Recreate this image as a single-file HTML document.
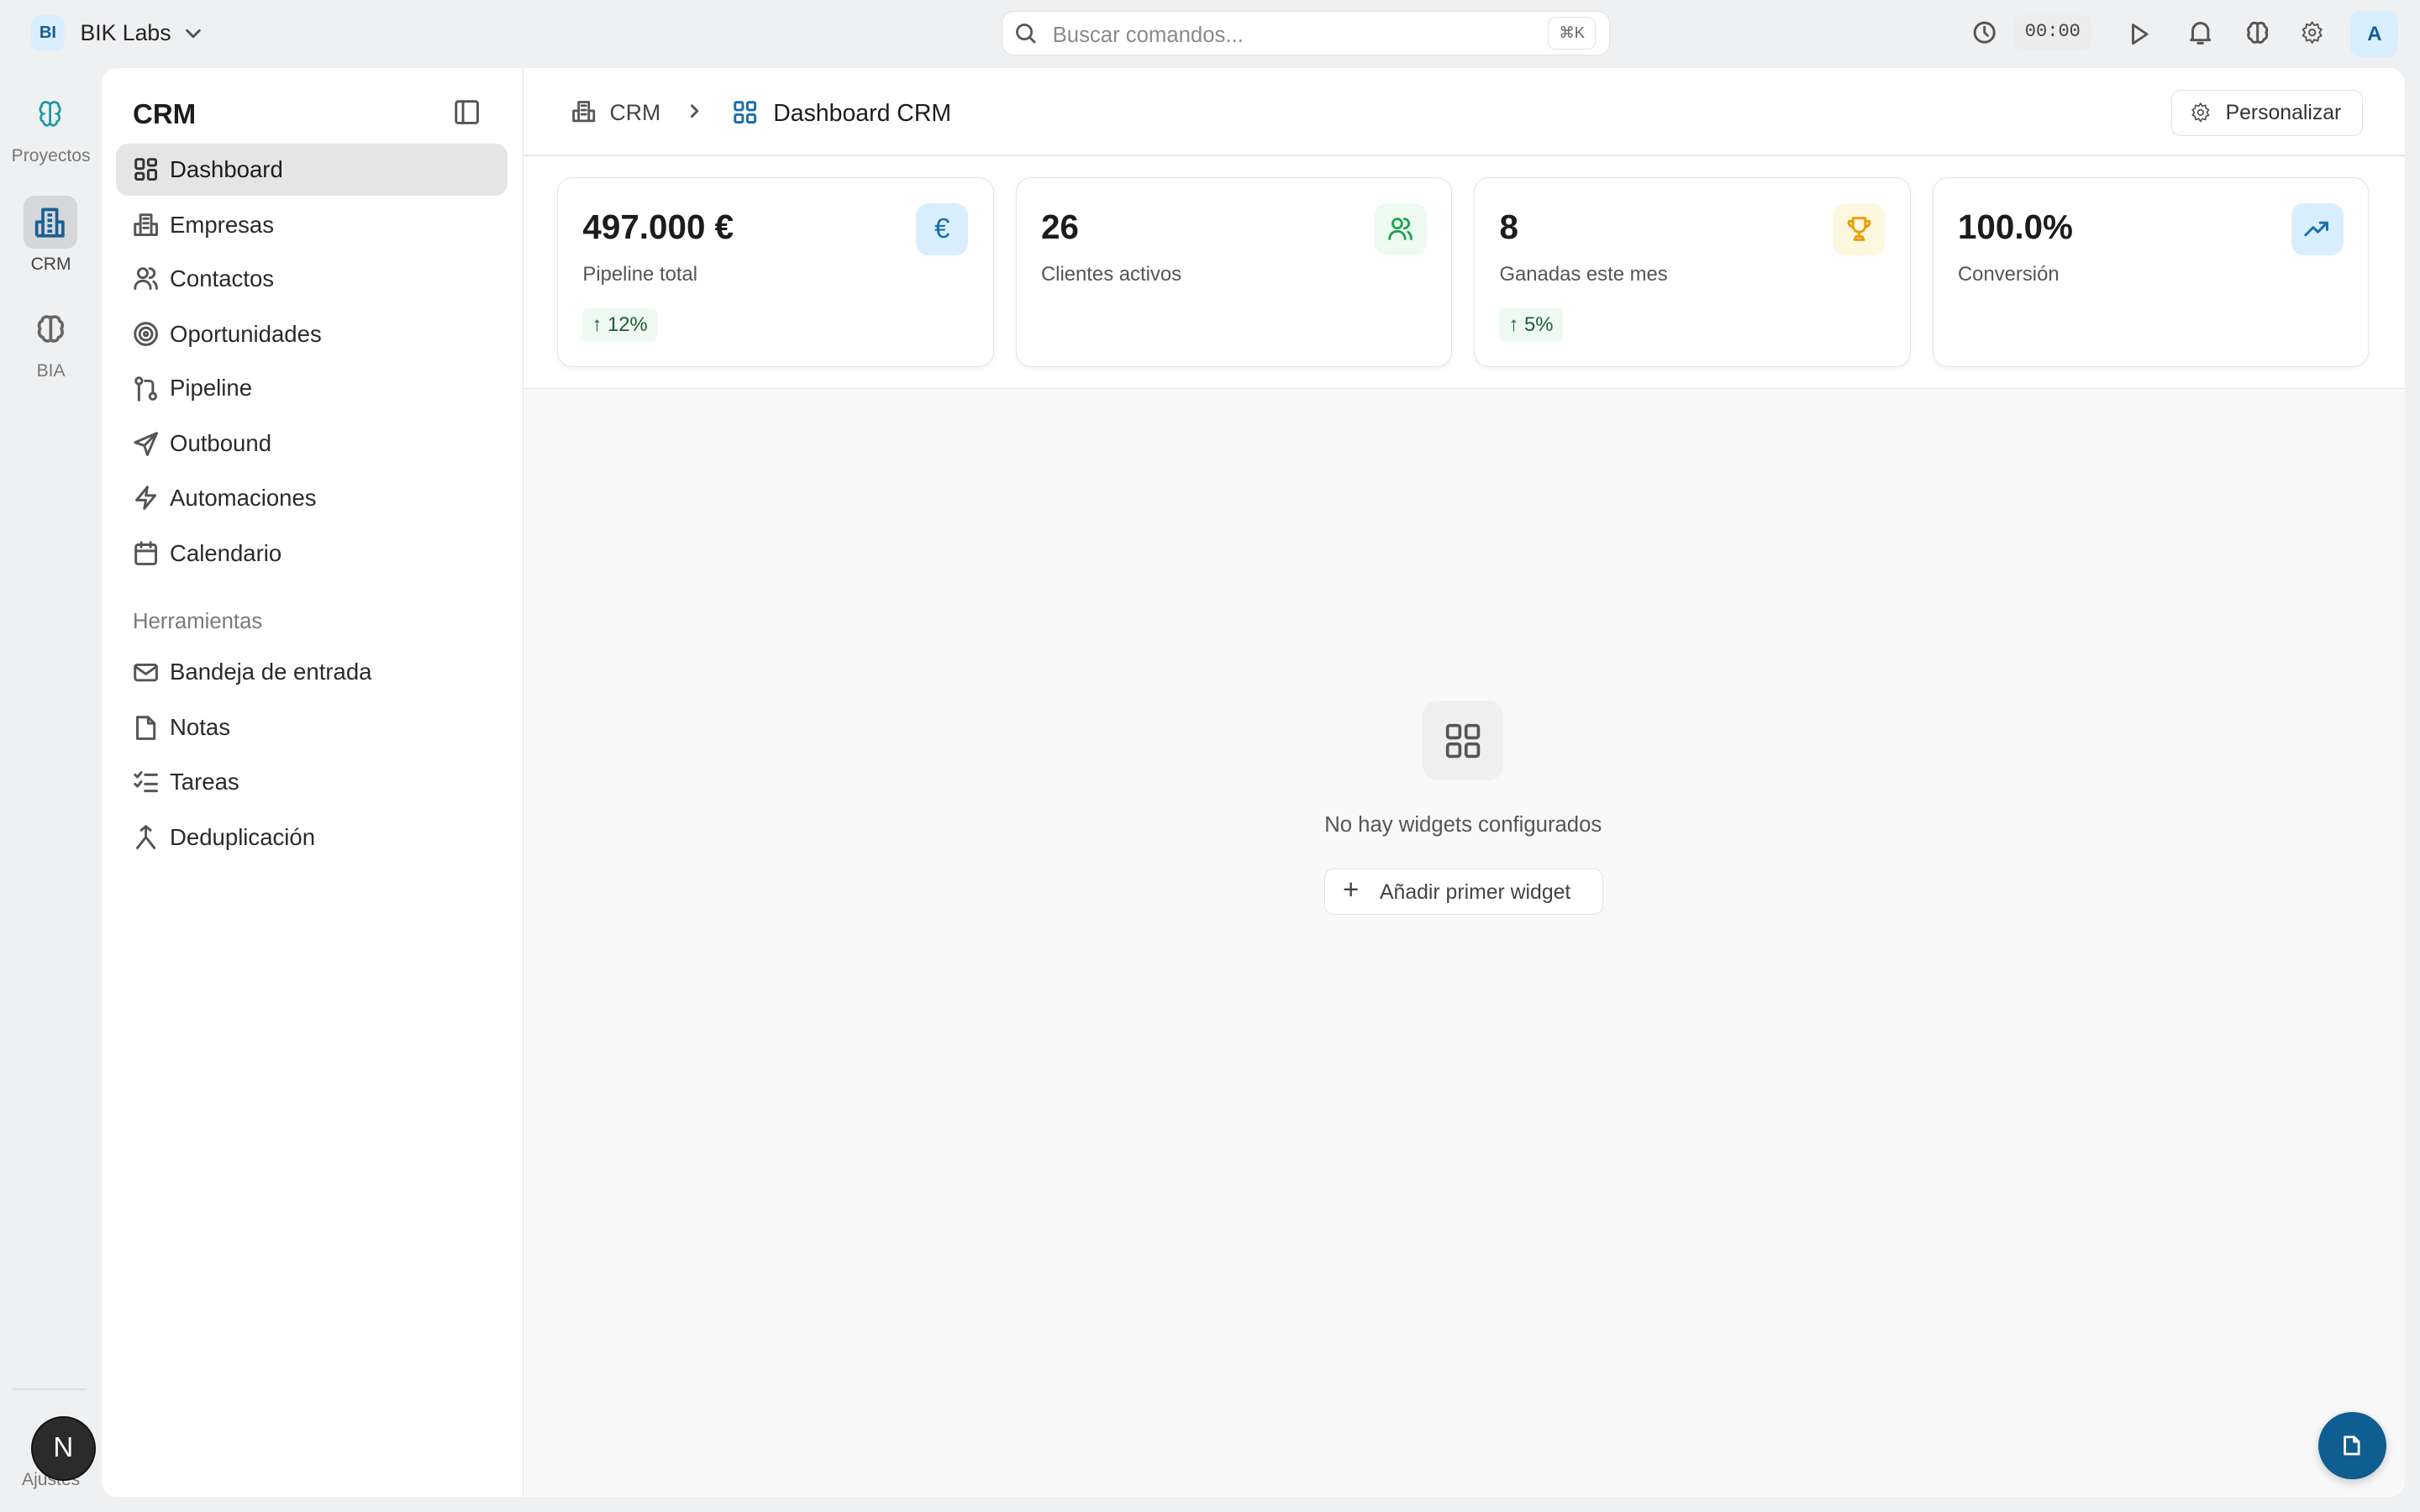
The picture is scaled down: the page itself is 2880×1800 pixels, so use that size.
<!DOCTYPE html>
<html><head><meta charset="utf-8"><style>
*{box-sizing:border-box;margin:0;padding:0}
html,body{width:2880px;height:1800px;overflow:hidden;background:#eff0f2}
#r{width:1568px;height:980px;zoom:1.836735;position:relative;font-family:"Liberation Sans",sans-serif;color:#1f1f1f;background:#eff0f2}
.a{position:absolute}
svg{display:block}
.ic{fill:none;stroke:#555;stroke-width:1.6;stroke-linecap:round;stroke-linejoin:round}
.nav{position:absolute;left:86px;font-size:15px;color:#2a2a2a;display:flex;align-items:center;gap:7px;margin-top:1px}
.nav svg{width:17px;height:17px}
.card{position:absolute;top:115px;width:283px;height:123px;background:#fff;border:1px solid #e4e4e4;border-radius:10px;box-shadow:0 1px 3px rgba(0,0,0,.06)}
.card .v{position:absolute;left:16px;top:19px;font-size:22px;font-weight:bold;color:#1c1c1c}
.card .l{position:absolute;left:16px;top:55px;font-size:13px;color:#555}
.card .b{position:absolute;right:16px;top:16px;width:34px;height:34px;border-radius:8px;display:flex;align-items:center;justify-content:center}
.card .t{position:absolute;left:16px;top:84px;height:22px;padding:0 6px;border-radius:4px;background:#eefaf1;color:#1f5c33;font-size:13px;line-height:22px}
</style></head><body><div id="r">
<div class="a" style="left:20px;top:10px;width:22px;height:23px;border-radius:6px;background:#d9eefc;color:#155e92;font-size:11px;font-weight:bold;text-align:center;line-height:23px">BI</div>
<div class="a" style="left:52px;top:13px;font-size:14.5px;color:#222">BIK Labs</div>
<svg class="a ic" style="left:119px;top:16px" width="12" height="12" viewBox="0 0 12 12"><path d="M2 4l4 4 4-4"/></svg>
<div class="a" style="left:649px;top:7px;width:394px;height:29px;background:#fff;border:1px solid #e2e2e2;border-radius:8px"></div>
<svg class="a ic" style="left:657px;top:14px" width="15" height="15" viewBox="0 0 16 16"><circle cx="7" cy="7" r="5"/><path d="M11 11l3 3"/></svg>
<div class="a" style="left:682px;top:15px;font-size:14px;color:#8a8a8a">Buscar comandos...</div>
<div class="a" style="left:1003px;top:11px;width:31px;height:21px;border:1px solid #e2e2e2;border-radius:5px;font-size:10px;color:#666;text-align:center;line-height:20px">⌘K</div>
<svg class="a ic" style="left:1278px;top:13px" width="16" height="16" viewBox="0 0 16 16"><circle cx="8" cy="8" r="6.3"/><path d="M8 4.5V8l2 2"/></svg>
<div class="a" style="left:1305px;top:10px;width:50px;height:22px;background:#ececec;border-radius:5px;font-family:'Liberation Mono',monospace;font-size:12px;color:#444;text-align:center;line-height:22px">00:00</div>
<svg class="a ic" style="left:1379px;top:14px" width="14" height="16" viewBox="0 0 14 16"><path d="M3 2l9 6-9 6z"/></svg>
<svg class="a ic" style="left:1418px;top:12px" width="16" height="18" viewBox="0 0 16 18"><path d="M3 13V8a5 5 0 0110 0v5l1 1H2z M6.5 16h3"/></svg>
<svg class="a ic" style="left:1455px;top:13px" width="16" height="16" viewBox="0 0 16 16"><path d="M8 2v12M8 2.5C6 1 3.5 2 3.5 4 2 4.5 1.5 6.5 2.5 8 1.5 9.5 2 12 4 12.5 4.5 14.5 7 15 8 13.5 9 15 11.5 14.5 12 12.5 14 12 14.5 9.5 13.5 8 14.5 6.5 14 4.5 12.5 4 12.5 2 10 1 8 2.5"/></svg>
<svg class="a ic" style="left:1490px;top:13px" width="16" height="16" viewBox="0 0 24 24"><circle cx="12" cy="12" r="3"/><path d="M12 2l2 3 3.5-1 .5 3.5L21 9l-2 3 2 3-3 1.5-.5 3.5-3.5-1-2 3-2-3-3.5 1L6 16.5 3 15l2-3-2-3 3-1.5L6.5 4 10 5z"/></svg>
<div class="a" style="left:1523px;top:7px;width:31px;height:30px;border-radius:7px;background:#d9eefc;color:#155e92;font-size:13px;font-weight:bold;text-align:center;line-height:30px">A</div>
<svg class="a" style="left:24px;top:64px" width="17" height="19" viewBox="0 0 17 19" fill="none" stroke="#1b9aa0" stroke-width="1.5"><path d="M8.5 2v15M8 3C6 1 3 2 3 4.5 1.5 6 2 9 4 9.5 2 10.5 2 14 4 14.5 4.5 17 7 18 8 16M9 3c2-2 5-1 5 1.5 1.5 1.5 1 4.5-1 5 2 1 2 4.5 0 5-.5 2.5-3 3.5-4 1.5"/></svg>
<div class="a" style="left:0;top:95px;width:66px;text-align:center;font-size:11.5px;color:#777">Proyectos</div>
<div class="a" style="left:15px;top:127px;width:35px;height:34px;background:#d5d7da;border-radius:7px"></div>
<svg class="a" style="left:22px;top:133px" width="21" height="22" viewBox="0 0 21 22" fill="none" stroke="#1a5f92" stroke-width="2" stroke-linejoin="round"><path d="M6 20V3h9v17M2 20V11h4M15 11h4v9H2M9 6.5h3M9 10h3M9 13.5h3M9 17h3"/></svg>
<div class="a" style="left:0;top:165px;width:66px;text-align:center;font-size:11.5px;color:#444">CRM</div>
<svg class="a ic" style="left:23px;top:203px;stroke:#666" width="20" height="20" viewBox="0 0 16 16"><path d="M8 2v12M8 2.5C6 1 3.5 2 3.5 4 2 4.5 1.5 6.5 2.5 8 1.5 9.5 2 12 4 12.5 4.5 14.5 7 15 8 13.5 9 15 11.5 14.5 12 12.5 14 12 14.5 9.5 13.5 8 14.5 6.5 14 4.5 12.5 4 12.5 2 10 1 8 2.5"/></svg>
<div class="a" style="left:0;top:234px;width:66px;text-align:center;font-size:11.5px;color:#777">BIA</div>
<div class="a" style="left:8px;top:900px;width:48px;height:1px;background:#ddd"></div>
<div class="a" style="left:0;top:953px;width:66px;text-align:center;font-size:11.5px;color:#777">Ajustes</div>
<div class="a" style="left:20px;top:918px;width:42px;height:42px;border-radius:50%;background:#2b2b2b;border:1.5px solid #111;color:#fff;font-size:18px;text-align:center;line-height:39px">N</div>
<div class="a" style="left:66px;top:44px;width:273px;height:926px;background:#fff;border-radius:10px 0 0 10px;border-right:1px solid #e6e6e6"></div>
<div class="a" style="left:86px;top:64px;font-size:18px;font-weight:bold;color:#1c1c1c">CRM</div>
<svg class="a ic" style="left:294px;top:64px" width="17" height="17" viewBox="0 0 17 17"><rect x="1.5" y="1.5" width="14" height="14" rx="1.5"/><path d="M6 1.5v14"/></svg>
<div class="a" style="left:75px;top:93px;width:254px;height:34px;background:#e5e5e5;border-radius:8px"></div>
<div class="nav" style="top:100px;color:#1c1c1c"><svg class="ic" style="stroke:#333" viewBox="0 0 17 17"><rect x="2" y="2" width="5" height="6" rx="1"/><rect x="10" y="2" width="5" height="4" rx="1"/><rect x="2" y="11" width="5" height="4" rx="1"/><rect x="10" y="9" width="5" height="6" rx="1"/></svg>Dashboard</div>
<div class="nav" style="top:136px"><svg class="ic" viewBox="0 0 17 17"><path d="M5 15V2h7v13M1.5 15V8H5M12 8h3.5v7h-14M7 4.5h3M7 7.5h3M7 10.5h3"/></svg>Empresas</div>
<div class="nav" style="top:171px"><svg class="ic" viewBox="0 0 17 17"><circle cx="6.5" cy="5" r="3"/><path d="M1.5 15c0-3 2-5 5-5s5 2 5 5M11 2a3 3 0 010 6M13.5 10.5c1.3.8 2 2.5 2 4.5"/></svg>Contactos</div>
<div class="nav" style="top:207px"><svg class="ic" viewBox="0 0 17 17"><circle cx="8.5" cy="8.5" r="7"/><circle cx="8.5" cy="8.5" r="4"/><circle cx="8.5" cy="8.5" r="1.2"/></svg>Oportunidades</div>
<div class="nav" style="top:242px"><svg class="ic" viewBox="0 0 17 17"><circle cx="4" cy="3.5" r="2"/><circle cx="13" cy="13.5" r="2"/><path d="M4 5.5V16M8 3.5h3a2 2 0 012 2v6"/></svg>Pipeline</div>
<div class="nav" style="top:278px"><svg class="ic" viewBox="0 0 17 17"><path d="M15.5 1.5L1.5 7.5l6 2 2 6zM7.5 9.5l8-8"/></svg>Outbound</div>
<div class="nav" style="top:313px"><svg class="ic" viewBox="0 0 17 17"><path d="M9.5 1.5L2.5 10h6l-1 5.5 7-8.5h-6z"/></svg>Automaciones</div>
<div class="nav" style="top:349px"><svg class="ic" viewBox="0 0 17 17"><rect x="2" y="3" width="13" height="12.5" rx="1.5"/><path d="M2 7h13M5.5 1.5v3M11.5 1.5v3"/></svg>Calendario</div>
<div class="a" style="left:86px;top:395px;font-size:14px;color:#7a7a7a">Herramientas</div>
<div class="nav" style="top:426px"><svg class="ic" viewBox="0 0 17 17"><rect x="1.5" y="3.5" width="14" height="10" rx="1.5"/><path d="M1.5 4.5l7 5 7-5"/></svg>Bandeja de entrada</div>
<div class="nav" style="top:462px"><svg class="ic" viewBox="0 0 17 17"><path d="M3 1.5h7l4 4v10H3zM10 1.5v4h4"/></svg>Notas</div>
<div class="nav" style="top:497px"><svg class="ic" viewBox="0 0 17 17"><path d="M1.5 4l1.5 1.5 2.5-3M8 4h7.5M1.5 10l1.5 1.5 2.5-3M8 10h7.5M8 14.5h7.5"/></svg>Tareas</div>
<div class="nav" style="top:533px"><svg class="ic" viewBox="0 0 17 17"><path d="M8.5 1.5v7M3 15.5L8.5 8.5 14 15.5M5.5 4l3-2.5 3 2.5"/></svg>Deduplicación</div>
<div class="a" style="left:339px;top:44px;width:1219px;height:926px;background:#f9f9f9;border-radius:0 10px 10px 0"></div>
<div class="a" style="left:339px;top:44px;width:1219px;height:208px;background:#fff;border-radius:0 10px 0 0;border-bottom:1px solid #e6e6e6"></div>
<div class="a" style="left:339px;top:100px;width:1219px;height:1px;background:#e6e6e6"></div>
<svg class="a ic" style="left:370px;top:64px" width="16" height="16" viewBox="0 0 17 17"><path d="M5 15V2h7v13M1.5 15V8H5M12 8h3.5v7h-14M7 4.5h3M7 7.5h3M7 10.5h3"/></svg>
<div class="a" style="left:395px;top:65px;font-size:14.5px;color:#444">CRM</div>
<svg class="a ic" style="left:445px;top:67px" width="10" height="10" viewBox="0 0 10 10"><path d="M3.5 1.5l3.5 3.5-3.5 3.5"/></svg>
<svg class="a" style="left:475px;top:65px" width="16" height="16" viewBox="0 0 16 16" fill="none" stroke="#1a6ea8" stroke-width="1.6"><rect x="1.5" y="1.5" width="5" height="5" rx="1"/><rect x="9.5" y="1.5" width="5" height="5" rx="1"/><rect x="1.5" y="9.5" width="5" height="5" rx="1"/><rect x="9.5" y="9.5" width="5" height="5" rx="1"/></svg>
<div class="a" style="left:501px;top:65px;font-size:15.5px;color:#1c1c1c">Dashboard CRM</div>
<div class="a" style="left:1407px;top:58px;width:124px;height:30px;border:1px solid #e2e2e2;border-radius:6px;background:#fff"></div>
<svg class="a ic" style="left:1419px;top:66px" width="14" height="14" viewBox="0 0 24 24"><circle cx="12" cy="12" r="3"/><path d="M12 2l2 3 3.5-1 .5 3.5L21 9l-2 3 2 3-3 1.5-.5 3.5-3.5-1-2 3-2-3-3.5 1L6 16.5 3 15l2-3-2-3 3-1.5L6.5 4 10 5z"/></svg>
<div class="a" style="left:1442px;top:66px;font-size:13.5px;color:#333">Personalizar</div>
<div class="card" style="left:361px"><div class="v">497.000 €</div><div class="l">Pipeline total</div><div class="b" style="background:#d9eefc;color:#1a6ea8;font-size:18px">€</div><div class="t">↑ 12%</div></div>
<div class="card" style="left:658px"><div class="v">26</div><div class="l">Clientes activos</div><div class="b" style="background:#edfaf0"><svg width="17" height="17" viewBox="0 0 17 17" fill="none" stroke="#19a04a" stroke-width="1.5" stroke-linecap="round"><circle cx="6.5" cy="5" r="3"/><path d="M1.5 15c0-3 2-5 5-5s5 2 5 5M11 2a3 3 0 010 6M13.5 10.5c1.3.8 2 2.5 2 4.5"/></svg></div></div>
<div class="card" style="left:955px"><div class="v">8</div><div class="l">Ganadas este mes</div><div class="b" style="background:#fef7e0"><svg width="18" height="18" viewBox="0 0 18 18" fill="none" stroke="#e8a000" stroke-width="1.6" stroke-linejoin="round"><path d="M5 2h8v5a4 4 0 01-8 0zM5 4H2.5a2.5 2.5 0 002.7 3.5M13 4h2.5a2.5 2.5 0 01-2.7 3.5M9 11v3M6 16h6l-1-2H7z"/></svg></div><div class="t">↑ 5%</div></div>
<div class="card" style="left:1252px"><div class="v">100.0%</div><div class="l">Conversión</div><div class="b" style="background:#d9eefc"><svg width="18" height="18" viewBox="0 0 18 18" fill="none" stroke="#1a6ea8" stroke-width="1.6" stroke-linecap="round" stroke-linejoin="round"><path d="M1.5 13l5-5 3 3 6-6M11 5h4.5v4.5"/></svg></div></div>
<div class="a" style="left:922px;top:454px;width:52px;height:52px;border-radius:10px;background:#efefef"></div>
<svg class="a" style="left:936px;top:468px" width="24" height="24" viewBox="0 0 24 24" fill="none" stroke="#555" stroke-width="2"><rect x="2" y="2" width="8" height="8" rx="1.5"/><rect x="14" y="2" width="8" height="8" rx="1.5"/><rect x="2" y="14" width="8" height="8" rx="1.5"/><rect x="14" y="14" width="8" height="8" rx="1.5"/></svg>
<div class="a" style="left:748px;top:527px;width:400px;text-align:center;font-size:14px;color:#555">No hay widgets configurados</div>
<div class="a" style="left:858px;top:563px;width:181px;height:30px;border:1px solid #e0e0e0;border-radius:6px;background:#fff"></div>
<div class="a" style="left:870px;top:567px;font-size:18px;color:#444">+</div>
<div class="a" style="left:894px;top:571px;font-size:13.5px;color:#444">Añadir primer widget</div>
<div class="a" style="left:1502px;top:915px;width:44px;height:44px;border-radius:50%;background:#0e5e91;box-shadow:0 2px 6px rgba(0,0,0,.2)"></div>
<svg class="a" style="left:1517px;top:930px" width="14" height="14" viewBox="0 0 14 14" fill="none" stroke="#fff" stroke-width="1.5"><path d="M2.5 1.5h6l3 3v8h-9zM8.5 1.5v3h3"/></svg>
</div></body></html>
